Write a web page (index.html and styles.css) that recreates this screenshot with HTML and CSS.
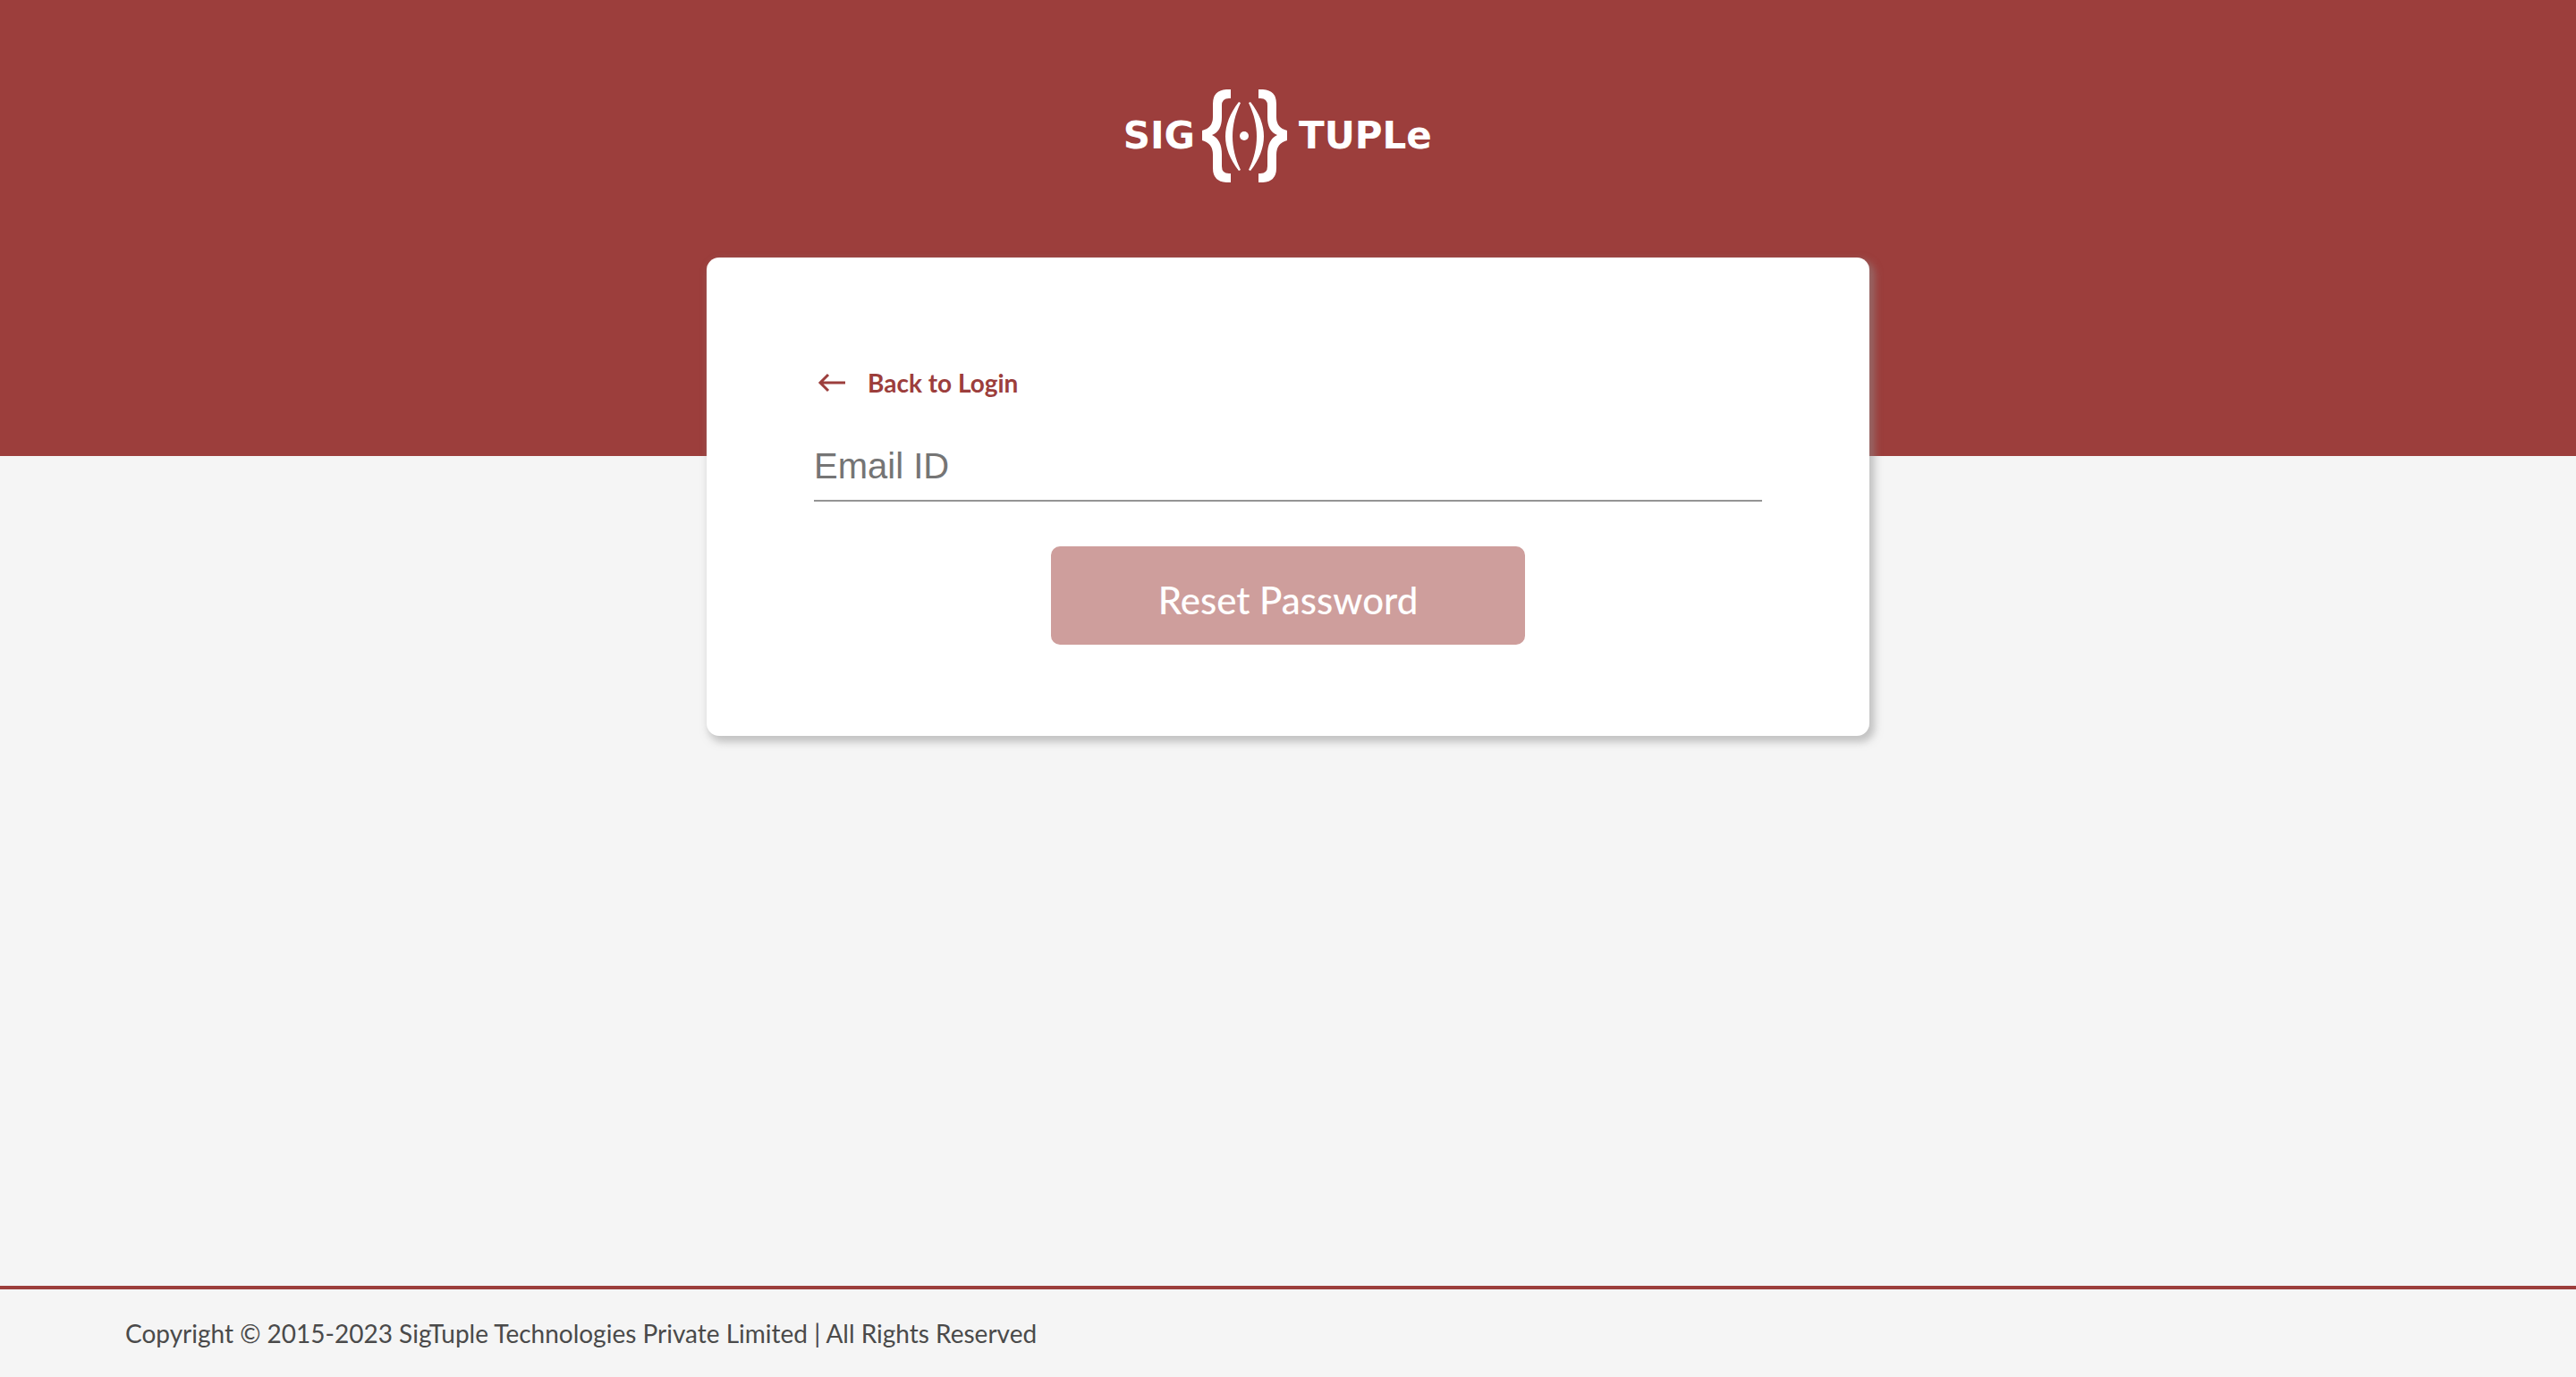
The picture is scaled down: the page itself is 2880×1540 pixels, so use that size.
FILE: index.html
```html
<!DOCTYPE html>
<html lang="en">
<head>
  <meta charset="utf-8">
  <meta name="viewport" content="width=device-width, initial-scale=1">
  <title>SigTuple - Reset Password</title>
  <link rel="stylesheet" href="styles.css">
</head>
<body>
  <header class="banner">
    <svg class="logo" viewBox="0 0 378 104" role="img" aria-label="SigTuple">
      <text class="logo-text" x="85" y="66" text-anchor="end">SIG</text>
      <path d="M125 0H120Q105 1 105 16V31Q105 43 93 46V57Q105 60 105 73V88Q105 103 120 104H125V94H123Q115 94 115 86V73Q115 56 104 51Q115 47 115 31V18Q115 10 123 10H125Z"/>
      <path d="M156 0H161Q176 1 176 16V31Q176 43 188 46V57Q176 60 176 73V88Q176 103 161 104H156V94H158Q166 94 166 86V73Q166 56 177 51Q166 47 166 31V18Q166 10 158 10H156Z"/>
      <path d="M134 14C114 40 114 65 134 91L136 90C124 65 124 40 136 15Z"/>
      <path d="M147 14C167 40 167 65 147 91L145 90C157 65 157 40 145 15Z"/>
      <circle cx="140" cy="52" r="5"/>
      <text class="logo-text" x="201" y="66">TUPLe</text>
    </svg>
  </header>

  <main class="content">
    <form class="card">
      <a class="back" href="#login">
        <svg class="back-icon" viewBox="0 0 40 40" aria-hidden="true">
          <path d="M35 20H7M16 11L7 20L16 29"/>
        </svg>
        <span>Back to Login</span>
      </a>
      <input class="email" type="email" placeholder="Email ID" aria-label="Email ID">
      <button class="reset" type="submit" disabled>Reset Password</button>
    </form>
  </main>

  <footer class="footer">Copyright © 2015-2023 SigTuple Technologies Private Limited | All Rights Reserved</footer>
</body>
</html>
```

FILE: styles.css
```css
* {
  box-sizing: border-box;
}

body {
  margin: 0;
  min-height: 100vh;
  display: flex;
  flex-direction: column;
  background: #f5f5f5;
  font-family: Lato, "Open Sans", sans-serif;
}

.banner {
  display: flex;
  justify-content: center;
  align-items: flex-start;
  padding: 100px 0 306px;
  background: #9c3e3c;
}

.logo {
  width: 378px;
  height: 104px;
  fill: #fff;
}

.logo-text {
  font-family: "DejaVu Sans", sans-serif;
  font-size: 42px;
  font-weight: 700;
}

.content {
  flex: 1;
  display: flex;
  justify-content: center;
  align-items: flex-start;
  margin-top: -222px;
}

.card {
  display: flex;
  flex-direction: column;
  width: 100%;
  max-width: 1300px;
  padding: 120px 120px 102px;
  border-radius: 14px;
  background: #fff;
  box-shadow: 4px 5px 8px 2px rgba(145, 145, 145, 0.5);
}

.back {
  display: flex;
  align-items: center;
  align-self: flex-start;
  gap: 20px;
  color: #9c3e3c;
  font-size: 28px;
  font-weight: 700;
  line-height: 40px;
  text-decoration: none;
}

.back-icon {
  width: 40px;
  height: 40px;
  fill: none;
  stroke: currentColor;
  stroke-width: 3;
}

.email {
  width: 100%;
  height: 77px;
  margin-top: 36px;
  padding: 0;
  border: 0;
  border-bottom: 2px solid #949494;
  background: transparent;
  font-family: "Liberation Sans", Arial, sans-serif;
  font-size: 40px;
}

.email::placeholder {
  color: #757575;
}

.reset {
  align-self: center;
  width: 50%;
  height: 110px;
  margin-top: 50px;
  padding: 10px 0 0;
  border: 0;
  border-radius: 10px;
  background: #ce9e9c;
  color: #fff;
  font-family: inherit;
  font-size: 42px;
  font-weight: 500;
}

.footer {
  padding: 29px 140px;
  border-top: 4px solid #9c3e3c;
  color: #4a4a4a;
  font-size: 28px;
  line-height: 40px;
}
```
